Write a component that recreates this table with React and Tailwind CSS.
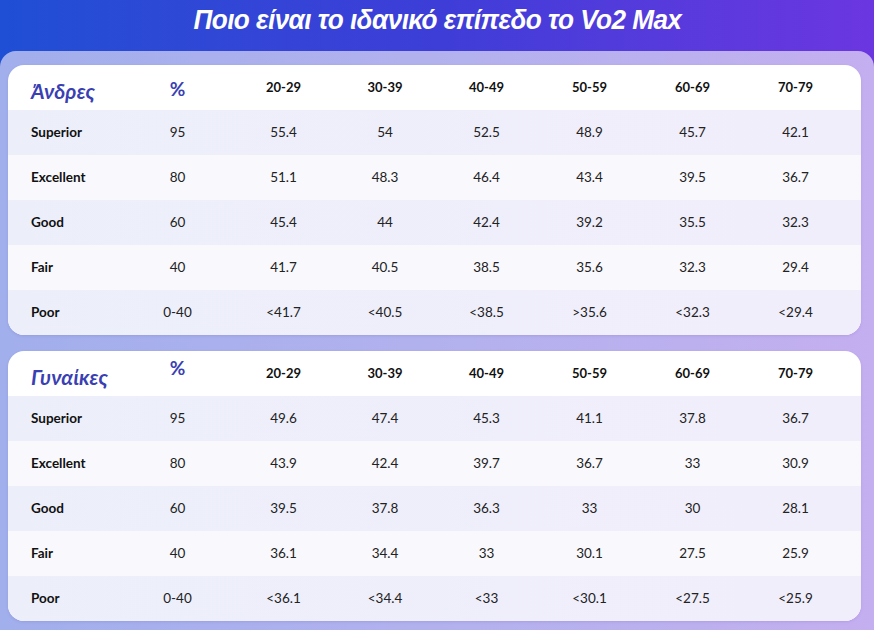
const cols = ["20-29", "30-39", "40-49", "50-59", "60-69", "70-79"];

const men = [
  ["Superior", "95", ["55.4", "54", "52.5", "48.9", "45.7", "42.1"]],
  ["Excellent", "80", ["51.1", "48.3", "46.4", "43.4", "39.5", "36.7"]],
  ["Good", "60", ["45.4", "44", "42.4", "39.2", "35.5", "32.3"]],
  ["Fair", "40", ["41.7", "40.5", "38.5", "35.6", "32.3", "29.4"]],
  ["Poor", "0-40", ["<41.7", "<40.5", "<38.5", ">35.6", "<32.3", "<29.4"]],
];

const women = [
  ["Superior", "95", ["49.6", "47.4", "45.3", "41.1", "37.8", "36.7"]],
  ["Excellent", "80", ["43.9", "42.4", "39.7", "36.7", "33", "30.9"]],
  ["Good", "60", ["39.5", "37.8", "36.3", "33", "30", "28.1"]],
  ["Fair", "40", ["36.1", "34.4", "33", "30.1", "27.5", "25.9"]],
  ["Poor", "0-40", ["<36.1", "<34.4", "<33", "<30.1", "<27.5", "<25.9"]],
];

const grid =
  "grid grid-cols-[115px_109px_103px_100px_103px_103px_103px_103px] items-center";

const Card = ({ title, rows, pctUp = false }) => {
  return (
    <div className="rounded-2xl bg-white overflow-hidden shadow-[0_1px_3px_rgba(80,60,160,0.15)]">
      <div className={`${grid} h-[45px]`}>
        <div className="pl-[23px] pt-[6px] text-[21px] font-bold italic text-[#3a3fb3] tracking-[0.2px]">
          {title}
        </div>
        <div
          className={`text-center text-[19px] font-bold text-[#3a3fb3] ${pctUp ? "-mt-[10px]" : "pt-[3px]"}`}
        >
          %
        </div>
        {cols.map((c) => (
          <div key={c} className="text-center text-[13px] font-bold text-[#111]">
            {c}
          </div>
        ))}
      </div>
      {rows.map(([label, pct, vals], i) => (
        <div
          key={label}
          className={`${grid} h-[45px] bg-gradient-to-r ${
            i % 2 === 0
              ? "from-[#eceffa] to-[#f1eefb]"
              : "from-[#f8f8fd] to-[#f9f8fd]"
          }`}
        >
          <div className="pl-[23px] text-[13.5px] font-bold text-[#111]">{label}</div>
          <div className="text-center text-[13.5px] text-[#222]">{pct}</div>
          {vals.map((v, j) => (
            <div key={j} className="text-center text-[13.5px] text-[#222]">
              {v}
            </div>
          ))}
        </div>
      ))}
    </div>
  );
};

export default function App() {
  return (
    <div className="w-[874px] h-[630px] overflow-hidden bg-gradient-to-r from-[#1e4fd4] via-[#3d3dd8] to-[#6b36e0] font-['Lato',sans-serif]">
      <div className="h-[51px] flex items-center justify-center">
        <h1 className="font-['Liberation_Sans',sans-serif] text-[27px] font-bold italic text-white tracking-[-0.6px] pb-[10px] scale-x-[0.97]">
          Ποιο είναι το ιδανικό επίπεδο το Vo2 Max
        </h1>
      </div>
      <div className="h-[579px] rounded-t-2xl bg-gradient-to-r from-[#a1afec] via-[#b2b1ee] to-[#c4aff0] pt-[14px] pl-[8px] pr-[13px] flex flex-col gap-[16px]">
        <Card title="Άνδρες" rows={men} />
        <Card title="Γυναίκες" rows={women} pctUp />
      </div>
    </div>
  );
}
